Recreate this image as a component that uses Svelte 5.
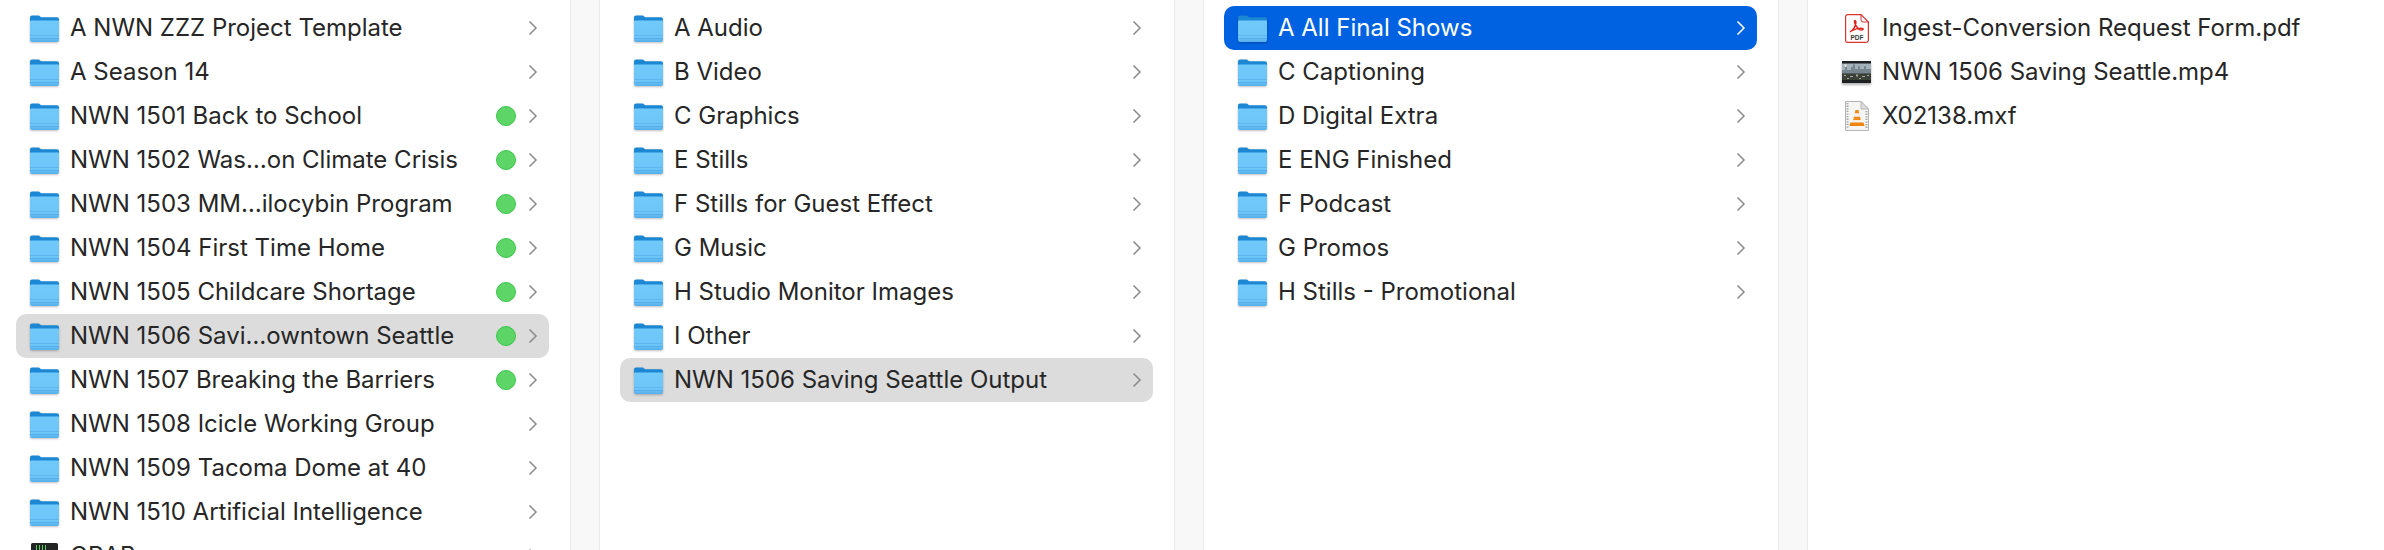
<script>
	const col1 = [
		{ name: 'A NWN ZZZ Project Template' },
		{ name: 'A Season 14' },
		{ name: 'NWN 1501 Back to School', tag: true },
		{ name: 'NWN 1502 Was…on Climate Crisis', tag: true },
		{ name: 'NWN 1503 MM…ilocybin Program', tag: true },
		{ name: 'NWN 1504 First Time Home', tag: true },
		{ name: 'NWN 1505 Childcare Shortage', tag: true },
		{ name: 'NWN 1506 Savi…owntown Seattle', tag: true, state: 'path' },
		{ name: 'NWN 1507 Breaking the Barriers', tag: true },
		{ name: 'NWN 1508 Icicle Working Group' },
		{ name: 'NWN 1509 Tacoma Dome at 40' },
		{ name: 'NWN 1510 Artificial Intelligence' },
		{ name: 'GRAB', icon: 'exec' }
	];
	const col2 = [
		{ name: 'A Audio' },
		{ name: 'B Video' },
		{ name: 'C Graphics' },
		{ name: 'E Stills' },
		{ name: 'F Stills for Guest Effect' },
		{ name: 'G Music' },
		{ name: 'H Studio Monitor Images' },
		{ name: 'I Other' },
		{ name: 'NWN 1506 Saving Seattle Output', state: 'path' }
	];
	const col3 = [
		{ name: 'A All Final Shows', state: 'active' },
		{ name: 'C Captioning' },
		{ name: 'D Digital Extra' },
		{ name: 'E ENG Finished' },
		{ name: 'F Podcast' },
		{ name: 'G Promos' },
		{ name: 'H Stills - Promotional' }
	];
	const col4 = [
		{ name: 'Ingest-Conversion Request Form.pdf', icon: 'pdf', leaf: true },
		{ name: 'NWN 1506 Saving Seattle.mp4', icon: 'video', leaf: true },
		{ name: 'X02138.mxf', icon: 'vlc', leaf: true }
	];
	const columns = [col1, col2, col3, col4];
</script>

<main class="browser">
	{#each columns as items, c}
		<section class="column">
			{#each items as item}
				<div class="row {item.state ?? ''}">
					<span class="icon">
						{#if item.icon === 'pdf'}
							<svg width="24" height="29" viewBox="0 0 24 29">
								<path d="M2.500 .600h13.500l7.400 7.400v18a2.400 2.400 0 0 1-2.400 2.400H2.500A2 2 0 0 1 .600 26.400V2.600a2 2 0 0 1 1.900-2z" fill="#fff" stroke="#d8352f" stroke-width="1.200"/>
								<path d="M16 .600v5.400a2 2 0 0 0 2 2h5.400" fill="none" stroke="#d8352f" stroke-width="1"/>
								<path d="M5.500 17.500c2.500-1.300 4.500-4.800 5.300-8 .5-2-.5-3.200-1.100-2.800-.8.500-.2 3.300 2.800 7 1.700 2 4 2.700 5.300 2 .8-.5.200-1.500-1.300-1.500-2.500-.1-6.500.8-9.700 2.500-1 .6-1.300 1.300-1.300.8z" fill="none" stroke="#e0251f" stroke-width="1.400"/>
								<text x="12" y="25.500" text-anchor="middle" class="pdf-label">PDF</text>
							</svg>
						{:else if item.icon === 'video'}
							<svg class="thumb" width="29" height="22" viewBox="0 0 29 22">
								<rect width="29" height="22" fill="#1d1f20"/>
								<rect y="2.500" width="29" height="10" fill="#a3b2bb"/>
								<path d="M0 12.500V9h3V6h2v3h4V6h2V3.500h2V8h3V5h2v3h4V5h2v3h5v4.500z" fill="#77858e"/>
								<rect y="12.500" width="29" height="6.500" fill="#3b4138"/>
								<path d="M2 14h2v1H2zM8 15h3v1H8zM14 13.500h2v2h-2zM20 15h3v1h-3zM25 14h2v1h-2zM5 17h2v1H5zM17 17h2v1h-2z" fill="#a3ad97"/>
								<path d="M2 3.500h3v1H4v1.500H3V4.500H2z" fill="#e8e8e8"/>
							</svg>
						{:else if item.icon === 'vlc'}
							<svg width="24" height="30" viewBox="0 0 24 30">
								<path d="M.500 .500h15.500l7.500 7.500v21.500H.500z" fill="#f5f5f3" stroke="#b4b4b4"/>
								<path d="M16 .500V8h7.500z" fill="#dedede" stroke="#b4b4b4"/>
								<path d="M2.500 2v26M21.500 10v18" stroke="#a8a8a8" stroke-width="2" stroke-dasharray="1.300 1.300"/>
								<path d="M10.500 9h3l.8 3.500h-4.600zM9 15.500h6l.8 3.500H8.200z" fill="#f08a1a"/>
								<path d="M9.700 12.500h4.600l.7 3H9zM8.200 19h7.600l.7 2.500h-9z" fill="#f6efe2"/>
								<path d="M5.500 21.500h13l1.200 3.500H4.300z" fill="#ee8512"/>
							</svg>
						{:else if item.icon === 'exec'}
							<svg width="27" height="26" viewBox="0 0 27 26">
								<rect width="27" height="26" rx="1.500" fill="#222523"/>
								<path d="M5 2h1v5H5zM8 2h1v5H8zM11 2h1v5h-1zM14 2h1v5h-1z" fill="#58c85c"/>
							</svg>
						{:else}
							<svg class="folder" width="29" height="27" viewBox="0 0 29 27">
								<defs>
									<linearGradient id="folder-front-{c}" x1="0" y1="0" x2="0" y2="1">
										<stop offset="0" stop-color="#72cafa"/>
										<stop offset="0.8" stop-color="#6cc4f8"/>
										<stop offset="1" stop-color="#55aeea"/>
									</linearGradient>
								</defs>
								<path d="M0 2.500A2 2 0 0 1 2 .500h6.500c1.300 0 1.800 1.800 3.200 1.800H27a2 2 0 0 1 2 2V12H0z" fill="#1c88d4"/>
								<path d="M0 6.500a1 1 0 0 1 1-1h27a1 1 0 0 1 1 1v18.500a2 2 0 0 1-2 2H2a2 2 0 0 1-2-2z" fill="url(#folder-front-{c})"/>
								<rect y="20" width="29" height="1" fill="#5db6ee"/>
								<rect y="23" width="29" height="1" fill="#55aeea"/>
							</svg>
						{/if}
					</span>
					<span class="name">{item.name}</span>
					{#if item.tag}<span class="tag"></span>{/if}
					{#if !item.leaf}
						<svg class="chevron" width="10" height="16" viewBox="0 0 10 16">
							<path d="M1.500 1.500 8 8l-6.500 6.500" fill="none" stroke="currentColor" stroke-width="1.500"/>
						</svg>
					{/if}
				</div>
			{/each}
		</section>
	{/each}
</main>

<style>
	:global(body) {
		margin: 0;
		background: #fff;
		overflow: hidden;
	}

	.browser {
		display: grid;
		grid-template-columns: repeat(4, 604px);
		width: 2384px;
		height: 550px;
		overflow: hidden;
		margin-left: -4px;
		font-family: Inter, 'Liberation Sans', sans-serif;
		font-size: 24px;
		color: #262626;
	}

	.column {
		box-sizing: border-box;
		height: 550px;
		padding: 6px 50px 0 20px;
		border-right: 1px solid #ebebeb;
		box-shadow: inset -29px 0 0 #f8f8f8;
		position: relative;
	}

	.column:last-child {
		border-right: 0;
		box-shadow: none;
	}

	.column::after {
		content: '';
		position: absolute;
		top: 0;
		bottom: 0;
		right: 28px;
		width: 1px;
		background: #ebebeb;
	}

	.column:last-child::after {
		display: none;
	}

	.row {
		display: flex;
		align-items: center;
		height: 44px;
		border-radius: 10px;
		padding: 0 14px;
	}

	.row.path {
		background: #dcdcdc;
	}

	.row.active {
		background: #0062e1;
		color: #fff;
	}

	.icon {
		display: flex;
		align-items: center;
		justify-content: center;
		flex: none;
		width: 29px;
		margin-right: 11px;
	}

	.folder {
		filter: drop-shadow(0 1px 1px rgba(0, 0, 0, 0.25));
	}

	.thumb {
		filter: drop-shadow(0 2px 1px rgba(0, 0, 0, 0.3));
	}

	.pdf-label {
		font-family: 'Liberation Sans', sans-serif;
		font-size: 6.500px;
		font-weight: 700;
		fill: #3a3a3a;
	}

	.name {
		flex: 1;
		white-space: nowrap;
		padding-bottom: 2px;
	}

	.tag {
		box-sizing: border-box;
		width: 20px;
		height: 20px;
		border-radius: 50%;
		background: #5dd667;
		border: 1.500px solid #3cc54b;
		margin-right: 12px;
	}

	.chevron {
		flex: none;
		color: #8a8a8a;
		margin-right: -3px;
	}

	.active .chevron {
		color: #fff;
	}
</style>
